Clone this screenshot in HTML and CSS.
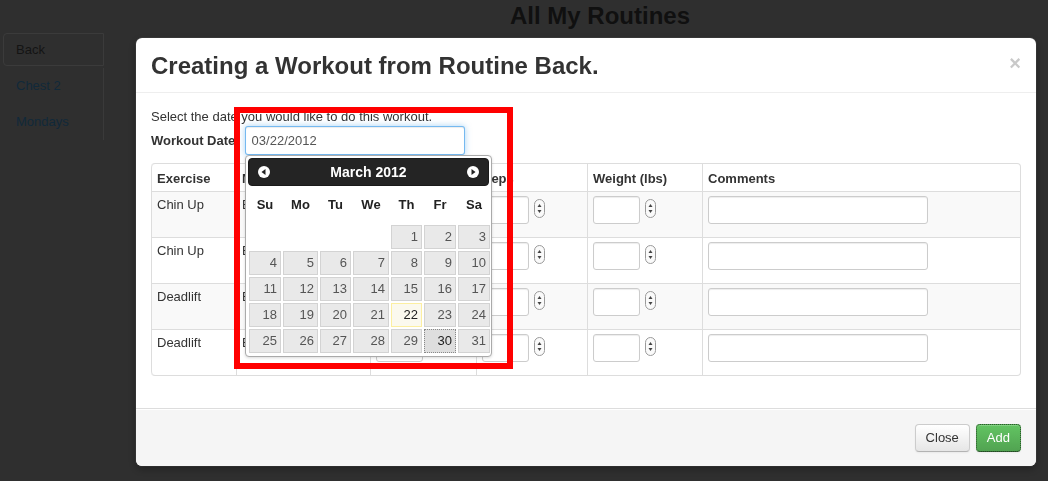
FILE: index.html
```html
<!DOCTYPE html>
<html>
<head>
<meta charset="utf-8">
<title>All My Routines</title>
<link rel="stylesheet" href="styles.css">
</head>
<body>
<div class="page">
  <ul class="sidenav">
    <li class="active">Back</li>
    <li>Chest 2</li>
    <li>Mondays</li>
  </ul>
  <div class="main">
    <h1>All My Routines</h1>
  </div>
</div>

<div class="modal">
  <div class="modal-header">
    <h3>Creating a Workout from Routine Back.</h3>
    <span class="close">×</span>
  </div>
  <div class="modal-body">
    <p class="intro">Select the date you would like to do this workout.</p>
    <div class="date-row">
      <label class="date-label">Workout Date:</label>
      <input class="date-input" type="text" value="03/22/2012">
    </div>
    <table class="grid">
      <thead>
        <tr>
          <th class="c1">Exercise</th>
          <th class="c2">Muscle Group</th>
          <th class="c3">Sets</th>
          <th class="c4">Reps</th>
          <th class="c5">Weight (lbs)</th>
          <th class="c6">Comments</th>
        </tr>
      </thead>
      <tbody>
        <tr>
          <td>Chin Up</td><td>Back</td>
          <td><input class="num" type="text"><span class="spin"><svg width="11" height="19" viewBox="0 0 11 19"><rect x="0.5" y="0.5" width="10" height="18" rx="5" fill="#fafafa" stroke="#9a9a9a"/><polygon points="3.5,8 5.5,5 7.5,8" fill="#444"/><polygon points="3.5,11 5.5,14 7.5,11" fill="#444"/></svg></span></td>
          <td><input class="num" type="text"><span class="spin"><svg width="11" height="19" viewBox="0 0 11 19"><rect x="0.5" y="0.5" width="10" height="18" rx="5" fill="#fafafa" stroke="#9a9a9a"/><polygon points="3.5,8 5.5,5 7.5,8" fill="#444"/><polygon points="3.5,11 5.5,14 7.5,11" fill="#444"/></svg></span></td>
          <td><input class="num" type="text"><span class="spin"><svg width="11" height="19" viewBox="0 0 11 19"><rect x="0.5" y="0.5" width="10" height="18" rx="5" fill="#fafafa" stroke="#9a9a9a"/><polygon points="3.5,8 5.5,5 7.5,8" fill="#444"/><polygon points="3.5,11 5.5,14 7.5,11" fill="#444"/></svg></span></td>
          <td><input class="txt" type="text"></td>
        </tr>
        <tr>
          <td>Chin Up</td><td>Back</td>
          <td><input class="num" type="text"><span class="spin"><svg width="11" height="19" viewBox="0 0 11 19"><rect x="0.5" y="0.5" width="10" height="18" rx="5" fill="#fafafa" stroke="#9a9a9a"/><polygon points="3.5,8 5.5,5 7.5,8" fill="#444"/><polygon points="3.5,11 5.5,14 7.5,11" fill="#444"/></svg></span></td>
          <td><input class="num" type="text"><span class="spin"><svg width="11" height="19" viewBox="0 0 11 19"><rect x="0.5" y="0.5" width="10" height="18" rx="5" fill="#fafafa" stroke="#9a9a9a"/><polygon points="3.5,8 5.5,5 7.5,8" fill="#444"/><polygon points="3.5,11 5.5,14 7.5,11" fill="#444"/></svg></span></td>
          <td><input class="num" type="text"><span class="spin"><svg width="11" height="19" viewBox="0 0 11 19"><rect x="0.5" y="0.5" width="10" height="18" rx="5" fill="#fafafa" stroke="#9a9a9a"/><polygon points="3.5,8 5.5,5 7.5,8" fill="#444"/><polygon points="3.5,11 5.5,14 7.5,11" fill="#444"/></svg></span></td>
          <td><input class="txt" type="text"></td>
        </tr>
        <tr>
          <td>Deadlift</td><td>Back</td>
          <td><input class="num" type="text"><span class="spin"><svg width="11" height="19" viewBox="0 0 11 19"><rect x="0.5" y="0.5" width="10" height="18" rx="5" fill="#fafafa" stroke="#9a9a9a"/><polygon points="3.5,8 5.5,5 7.5,8" fill="#444"/><polygon points="3.5,11 5.5,14 7.5,11" fill="#444"/></svg></span></td>
          <td><input class="num" type="text"><span class="spin"><svg width="11" height="19" viewBox="0 0 11 19"><rect x="0.5" y="0.5" width="10" height="18" rx="5" fill="#fafafa" stroke="#9a9a9a"/><polygon points="3.5,8 5.5,5 7.5,8" fill="#444"/><polygon points="3.5,11 5.5,14 7.5,11" fill="#444"/></svg></span></td>
          <td><input class="num" type="text"><span class="spin"><svg width="11" height="19" viewBox="0 0 11 19"><rect x="0.5" y="0.5" width="10" height="18" rx="5" fill="#fafafa" stroke="#9a9a9a"/><polygon points="3.5,8 5.5,5 7.5,8" fill="#444"/><polygon points="3.5,11 5.5,14 7.5,11" fill="#444"/></svg></span></td>
          <td><input class="txt" type="text"></td>
        </tr>
        <tr>
          <td>Deadlift</td><td>Back</td>
          <td><input class="num" type="text"><span class="spin"><svg width="11" height="19" viewBox="0 0 11 19"><rect x="0.5" y="0.5" width="10" height="18" rx="5" fill="#fafafa" stroke="#9a9a9a"/><polygon points="3.5,8 5.5,5 7.5,8" fill="#444"/><polygon points="3.5,11 5.5,14 7.5,11" fill="#444"/></svg></span></td>
          <td><input class="num" type="text"><span class="spin"><svg width="11" height="19" viewBox="0 0 11 19"><rect x="0.5" y="0.5" width="10" height="18" rx="5" fill="#fafafa" stroke="#9a9a9a"/><polygon points="3.5,8 5.5,5 7.5,8" fill="#444"/><polygon points="3.5,11 5.5,14 7.5,11" fill="#444"/></svg></span></td>
          <td><input class="num" type="text"><span class="spin"><svg width="11" height="19" viewBox="0 0 11 19"><rect x="0.5" y="0.5" width="10" height="18" rx="5" fill="#fafafa" stroke="#9a9a9a"/><polygon points="3.5,8 5.5,5 7.5,8" fill="#444"/><polygon points="3.5,11 5.5,14 7.5,11" fill="#444"/></svg></span></td>
          <td><input class="txt" type="text"></td>
        </tr>
      </tbody>
    </table>
  </div>
  <div class="modal-footer">
    <button class="btn btn-close">Close</button>
    <button class="btn btn-add">Add</button>
  </div>

  <div class="datepicker">
    <div class="dp-head">
      <svg class="dp-nav" width="12" height="12" viewBox="0 0 12 12"><circle cx="6" cy="6" r="6" fill="#fff"/><polygon points="7.5,3 3.5,6 7.5,9" fill="#222"/></svg>
      <span class="dp-title">March 2012</span>
      <svg class="dp-nav" width="12" height="12" viewBox="0 0 12 12"><circle cx="6" cy="6" r="6" fill="#fff"/><polygon points="4.5,3 8.5,6 4.5,9" fill="#222"/></svg>
    </div>
    <table class="cal">
      <colgroup>
        <col class="w34"><col class="w37"><col class="w33"><col class="w38"><col class="w33"><col class="w34"><col class="w34">
      </colgroup>
      <thead>
        <tr><th>Su</th><th>Mo</th><th>Tu</th><th>We</th><th>Th</th><th>Fr</th><th>Sa</th></tr>
      </thead>
      <tbody>
        <tr><td></td><td></td><td></td><td></td><td><span class="d">1</span></td><td><span class="d">2</span></td><td><span class="d">3</span></td></tr>
        <tr><td><span class="d">4</span></td><td><span class="d">5</span></td><td><span class="d">6</span></td><td><span class="d">7</span></td><td><span class="d">8</span></td><td><span class="d">9</span></td><td><span class="d">10</span></td></tr>
        <tr><td><span class="d">11</span></td><td><span class="d">12</span></td><td><span class="d">13</span></td><td><span class="d">14</span></td><td><span class="d">15</span></td><td><span class="d">16</span></td><td><span class="d">17</span></td></tr>
        <tr><td><span class="d">18</span></td><td><span class="d">19</span></td><td><span class="d">20</span></td><td><span class="d">21</span></td><td><span class="d today">22</span></td><td><span class="d">23</span></td><td><span class="d">24</span></td></tr>
        <tr><td><span class="d">25</span></td><td><span class="d">26</span></td><td><span class="d">27</span></td><td><span class="d">28</span></td><td><span class="d">29</span></td><td><span class="d active">30</span></td><td><span class="d">31</span></td></tr>
      </tbody>
    </table>
  </div>

  <div class="annot"></div>
</div>
</body>
</html>
```

FILE: styles.css
```css
html, body {
  margin: 0;
  padding: 0;
}

body {
  width: 1048px;
  height: 481px;
  overflow: hidden;
  background: #2f2f2f;
  font-family: "Liberation Sans", Arial, sans-serif;
  font-size: 13px;
  line-height: 18px;
  color: #333;
}

/* dimmed page behind the modal */
.page {
  display: flex;
}

.sidenav {
  list-style: none;
  margin: 33px 0 0 3px;
  padding: 0;
  width: 101px;
}

.sidenav li {
  height: 36px;
  line-height: 36px;
  padding-left: 13px;
  color: #11293a;
  border-right: 1px solid #3a3a3a;
  box-sizing: border-box;
}

.sidenav li.active {
  height: 33px;
  line-height: 31px;
  margin-bottom: 2px;
  padding-left: 12px;
  color: #141414;
  border: 1px solid #3b3b3b;
  border-radius: 4px 0 0 4px;
}

.main {
  flex: 1;
  margin-left: 48px;
}

.main h1 {
  margin: 0;
  font-size: 24px;
  line-height: 32px;
  font-weight: bold;
  text-align: center;
  color: #101010;
}

/* modal */
.modal {
  position: fixed;
  left: 136px;
  top: 38px;
  width: 900px;
  background: #fff;
  border-radius: 6px;
  box-shadow: 0 3px 7px rgba(0, 0, 0, 0.3), 0 0 0 1px rgba(255, 255, 255, 0.06);
}

.modal-header {
  display: flex;
  justify-content: space-between;
  align-items: flex-start;
  padding: 13px 15px 11px;
  border-bottom: 1px solid #eee;
}

.modal-header h3 {
  margin: 0;
  font-size: 24px;
  line-height: 30px;
  font-weight: bold;
  color: #333;
}

.close {
  margin-top: 3px;
  font-size: 20px;
  line-height: 18px;
  font-weight: bold;
  color: #c9c9c9;
}

.modal-body {
  padding: 15px;
}

.intro {
  margin: 0;
}

.date-row {
  display: flex;
  align-items: center;
  gap: 5px;
}

.date-label {
  font-weight: bold;
}

.date-input {
  width: 220px;
  height: 29px;
  box-sizing: border-box;
  margin: 0;
  padding: 4px 6px;
  font-family: "Liberation Sans", Arial, sans-serif;
  font-size: 13px;
  color: #555;
  border: 1px solid rgba(82, 168, 236, 0.8);
  border-radius: 3px;
  box-shadow: inset 0 1px 1px rgba(0, 0, 0, 0.075), 0 0 6px rgba(82, 168, 236, 0.5);
  outline: none;
}

/* workout table */
.grid {
  margin: 8px 0 17px;
  width: 870px;
  table-layout: fixed;
  border: 1px solid #ddd;
  border-left: 0;
  border-collapse: separate;
  border-spacing: 0;
  border-radius: 4px;
}

.grid th,
.grid td {
  box-sizing: border-box;
  padding: 4px 5px;
  border-left: 1px solid #ddd;
  text-align: left;
  vertical-align: top;
  line-height: 18px;
}

.grid th {
  padding-top: 6px;
  padding-bottom: 3px;
  font-weight: bold;
}

.grid th.c1 { width: 85px; border-top-left-radius: 4px; }
.grid th.c2 { width: 134px; }
.grid th.c3 { width: 106px; }
.grid th.c4 { width: 111px; }
.grid th.c5 { width: 115px; }
.grid th.c6 { width: 318px; }

.grid tbody td {
  border-top: 1px solid #ddd;
}

.grid tbody tr:nth-child(odd) td {
  background: #f9f9f9;
}

.grid tbody tr:last-child td:first-child {
  border-bottom-left-radius: 4px;
}

.num,
.txt {
  height: 28px;
  box-sizing: border-box;
  margin: 0 0 9px;
  padding: 4px 6px;
  vertical-align: top;
  background: #fff;
  border: 1px solid #ccc;
  border-radius: 3px;
  box-shadow: inset 0 1px 1px rgba(0, 0, 0, 0.075);
  font-family: "Liberation Sans", Arial, sans-serif;
  font-size: 13px;
}

.num {
  width: 47px;
}

.txt {
  width: 220px;
}

.spin {
  display: inline-block;
  vertical-align: top;
  margin: 3px 0 0 5px;
  width: 11px;
  height: 19px;
}

.spin svg {
  display: block;
}

/* footer */
.modal-footer {
  display: flex;
  justify-content: flex-end;
  gap: 6px;
  padding: 15px 15px 14px;
  background: #f5f5f5;
  border-top: 1px solid #ddd;
  border-radius: 0 0 6px 6px;
  box-shadow: inset 0 1px 0 #fff;
}

.btn {
  height: 28px;
  box-sizing: border-box;
  margin: 0;
  padding: 0 10px;
  font-family: "Liberation Sans", Arial, sans-serif;
  font-size: 13px;
  line-height: 18px;
  color: #333;
  background: linear-gradient(#ffffff, #e6e6e6);
  border: 1px solid #ccc;
  border-bottom-color: #b3b3b3;
  border-radius: 4px;
  box-shadow: inset 0 1px 0 rgba(255, 255, 255, 0.2), 0 1px 2px rgba(0, 0, 0, 0.05);
}

.btn-add {
  padding: 0 10px;
  color: #fff;
  background: linear-gradient(#62c462, #51a351);
  border-color: #51a351 #51a351 #387038;
  outline: 1px dotted rgba(0, 0, 0, 0.45);
  outline-offset: -1px;
}

/* datepicker popup */
.datepicker {
  position: absolute;
  left: 109px;
  top: 117px;
  width: 247px;
  box-sizing: border-box;
  padding: 2px;
  background: #fff;
  border: 1px solid #aaa;
  border-radius: 4px;
  box-shadow: 0 1px 3px rgba(0, 0, 0, 0.15);
}

.dp-head {
  height: 28px;
  box-sizing: border-box;
  display: flex;
  align-items: center;
  justify-content: space-between;
  padding: 0 9px;
  background: #242424;
  border: 1px solid #1a1a1a;
  border-radius: 4px;
}

.dp-nav {
  display: block;
}

.dp-title {
  font-size: 14px;
  font-weight: bold;
  color: #fff;
}

.cal {
  width: 243px;
  table-layout: fixed;
  border-collapse: collapse;
  margin: 0;
}

.cal col.w34 { width: 34px; }
.cal col.w37 { width: 37px; }
.cal col.w33 { width: 33px; }
.cal col.w38 { width: 38px; }

.cal th {
  padding: 10px 0 10px;
  font-size: 13px;
  line-height: 18px;
  font-weight: bold;
  text-align: center;
  color: #222;
}

.cal td {
  padding: 1px;
  height: 24px;
}

.cal .d {
  display: block;
  height: 24px;
  box-sizing: border-box;
  padding-right: 3px;
  line-height: 22px;
  text-align: right;
  font-size: 13px;
  color: #555;
  background: #e9e9e9;
  border: 1px solid #d3d3d3;
}

.cal .d.today {
  background: #fbf9ee;
  border-color: #fcefa1;
  color: #222;
}

.cal .d.active {
  background: #dedede;
  border: 1px dotted #888;
  color: #212121;
}

/* red annotation frame */
.annot {
  position: absolute;
  left: 98px;
  top: 69px;
  width: 279px;
  height: 262px;
  box-sizing: border-box;
  border: 6px solid #f00;
  pointer-events: none;
}
```
